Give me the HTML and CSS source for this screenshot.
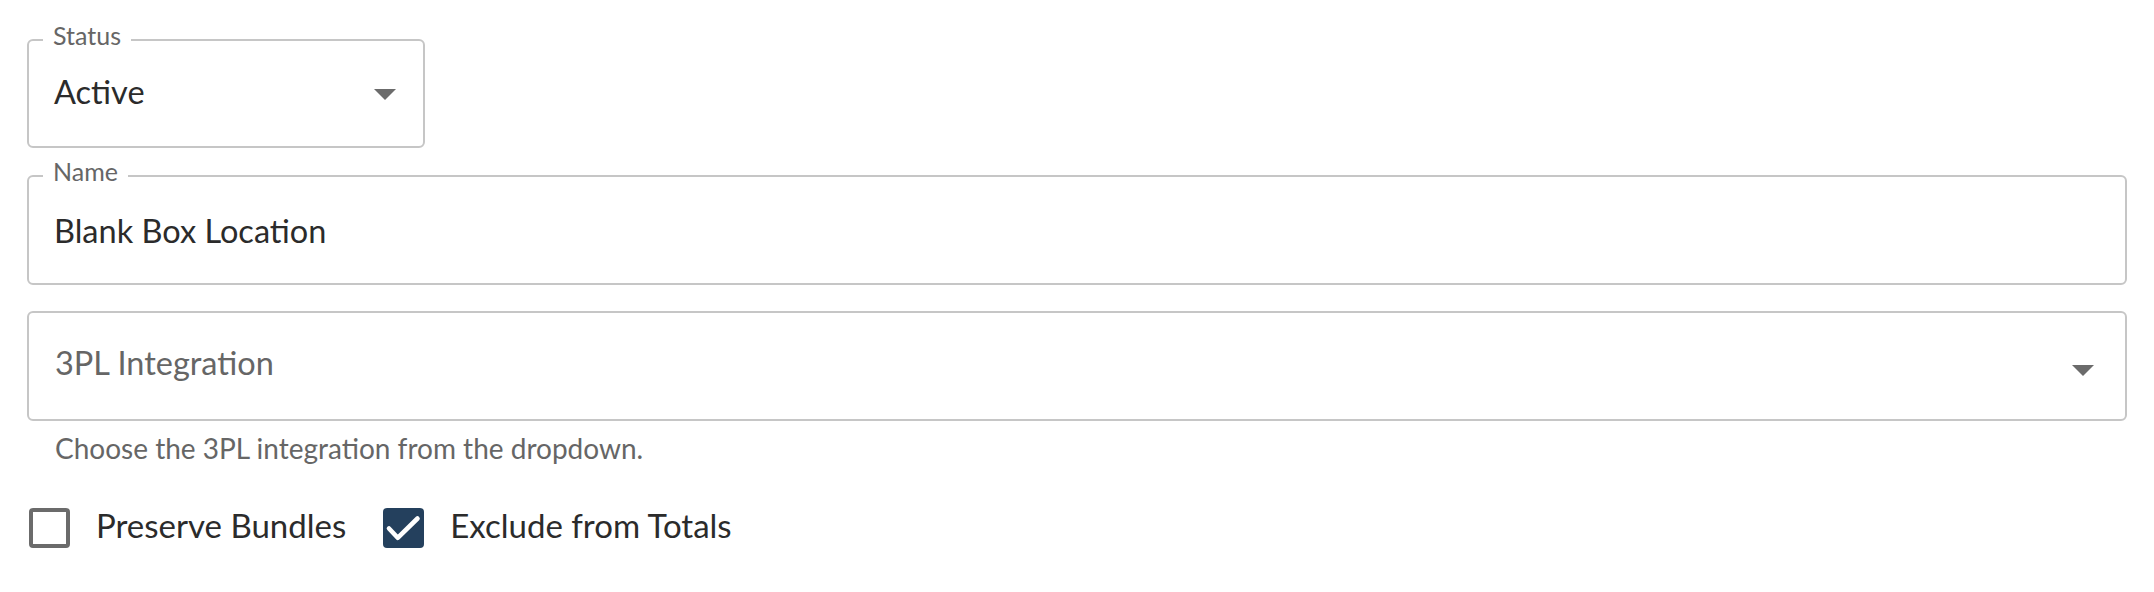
FILE: index.html
```html
<!DOCTYPE html>
<html lang="en">
<head>
  <meta charset="UTF-8">
  <meta name="viewport" content="width=device-width, initial-scale=1.0">
  <title>Location</title>
  <link rel="stylesheet" href="styles.css">
</head>
<body>
  <form class="form">
    <fieldset class="field field-status">
      <legend>Status</legend>
      <div class="field-row">
        <span class="value">Active</span>
        <svg class="arrow" width="22" height="11" viewBox="0 0 22 11"><path d="M0 0h22L11 11z"/></svg>
      </div>
    </fieldset>

    <fieldset class="field field-name">
      <legend>Name</legend>
      <div class="field-row">
        <span class="value">Blank Box Location</span>
      </div>
    </fieldset>

    <div class="field field-plain">
      <div class="field-row">
        <span class="value placeholder">3PL Integration</span>
        <svg class="arrow" width="22" height="11" viewBox="0 0 22 11"><path d="M0 0h22L11 11z"/></svg>
      </div>
    </div>
    <p class="helper">Choose the 3PL integration from the dropdown.</p>

    <div class="checks">
      <label class="check">
        <span class="box"></span>
        <span class="check-label">Preserve Bundles</span>
      </label>
      <label class="check">
        <span class="box checked">
          <svg width="41" height="40" viewBox="0 0 41 40"><path d="M6 20.5l8.7 9.3L34.5 10.5" fill="none" stroke="#fff" stroke-width="4.6" stroke-linecap="round" stroke-linejoin="round"/></svg>
        </span>
        <span class="check-label">Exclude from Totals</span>
      </label>
    </div>
  </form>
</body>
</html>
```

FILE: styles.css
```css
* { box-sizing: border-box; }
html, body { margin: 0; padding: 0; background: #fff; }
body { font-family: Lato, "Open Sans", sans-serif; color: #2b2b2b; }

.form { padding: 24px 27px 0 27px; }

/* outlined inputs */
.field {
  margin: 0; padding: 0; min-width: 0;
  border: 2px solid #c6c6c6; border-radius: 6px;
}
.field legend {
  margin-left: 14px; padding: 0 10px 9px 10px;
  font-size: 25px; line-height: 22px; color: #666;
}
.field-status { width: 398px; }
.field-name { margin-top: 12px; }
.field-plain { margin-top: 26px; }

.field-row {
  display: flex; align-items: center; justify-content: space-between;
  padding: 0 27px 0 25px;
}
.field-status .field-row { height: 91px; padding-bottom: 18px; }
.field-status .arrow { margin-top: 6px; }
.field-name .field-row { height: 92px; padding-bottom: 13px; }
.field-plain .field-row { height: 106px; padding: 0 31px 7px 26px; }
.field-plain .arrow { margin-top: 15px; }

.value { font-size: 32.5px; color: #2b2b2b; }
.placeholder { color: #666; }
.arrow { fill: #6b6b6b; flex: none; }

.helper {
  margin: 12px 0 0 28px;
  font-size: 28px; line-height: 30px; color: #666;
}

/* checkboxes */
.checks { display: flex; gap: 37px; margin-top: 42px; padding-left: 2px; }
.check { display: flex; align-items: center; gap: 26px; }
.box {
  width: 41px; height: 40px; flex: none;
  border: 4px solid #6b6b6b; border-radius: 4px;
}
.box.checked { border: none; background: #24405d; }
.box svg { display: block; }
.check-label { font-size: 33px; line-height: 40px; margin-bottom: 6px; color: #2b2b2b; }
```
